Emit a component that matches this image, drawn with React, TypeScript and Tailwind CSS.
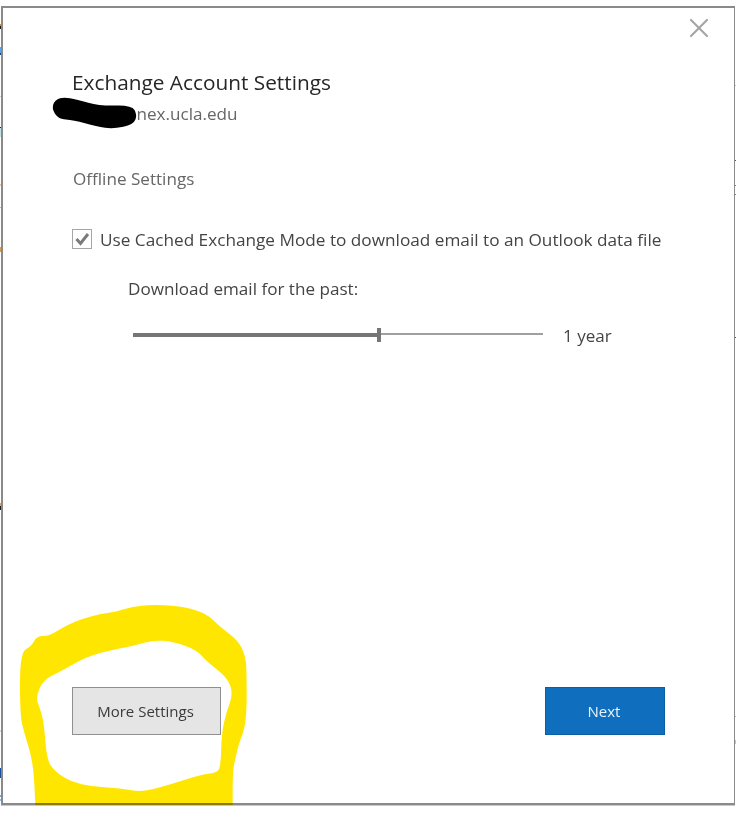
import React from "react";
import { X } from "lucide-react";

const font = { fontFamily: '"Open Sans", "Noto Sans", sans-serif' };

// bits of the windows behind the dialog that peek out at the screen edge
const leftMarks = [
  { top: 24, height: 2, color: "#d98a2b" },
  { top: 26, height: 3, color: "#1a1a1a" },
  { top: 47, height: 6, color: "#5aa3e8" },
  { top: 53, height: 2, color: "#1d3f73" },
  { top: 96, height: 1, color: "#cfcfcf" },
  { top: 127, height: 1, color: "#222222" },
  { top: 128, height: 9, color: "#bfe3e6" },
  { top: 184, height: 2, color: "#f0c890" },
  { top: 207, height: 1, color: "#bdbdbd" },
  { top: 247, height: 5, color: "#e09a45" },
  { top: 503, height: 3, color: "#e8a060" },
  { top: 506, height: 4, color: "#222222" },
  { top: 730, height: 2, color: "#cfe0d8" },
  { top: 768, height: 10, color: "#1a4f9c" },
  { top: 795, height: 2, color: "#7aa7d8" },
  { top: 799, height: 2, color: "#9ab8d8" },
];

const rightMarks = [
  { top: 85, height: 1, color: "#c4c4c4" },
  { top: 160, height: 1, color: "#555555" },
  { top: 185, height: 1, color: "#b5752d" },
  { top: 194, height: 1, color: "#b5752d" },
  { top: 337, height: 1, color: "#555555" },
  { top: 716, height: 1, color: "#bdbdbd" },
  { top: 740, height: 4, color: "#c4c8a8" },
];

// the last points run past the crop so the marker stays cut off flat at the dialog edge
const yellowOuter = [[60,188],[95,168],[110,138],[148,138],[200,105],[250,85],[300,72],[345,66],[415,45],[520,45],[590,60],[630,80],[660,110],[715,152],[735,195],[740,235],[740,400],[715,465],[708,500],[698,540],[698,660],[698,760],[110,760],[105,610],[98,510],[70,420],[60,370]];
const yellowInner = [[130,270],[180,245],[260,200],[340,178],[400,168],[460,150],[520,155],[590,180],[620,215],[680,260],[700,310],[678,370],[665,430],[662,530],[650,548],[600,555],[520,580],[430,607],[360,595],[280,590],[210,575],[160,540],[140,505],[132,400],[120,355],[107,322]];
const blackBlob = [[155,325],[165,300],[190,291],[230,298],[300,318],[395,315],[412,345],[400,374],[340,387],[290,380],[220,360],[175,357]];

// closed curve through the midpoints, keeps the marker strokes from looking faceted
function smooth(pts: number[][]) {
  const mid = (a: number[], b: number[]) => `${(a[0] + b[0]) / 2} ${(a[1] + b[1]) / 2}`;
  let d = `M${mid(pts[pts.length - 1], pts[0])}`;
  pts.forEach((p, i) => {
    d += ` Q${p[0]} ${p[1]} ${mid(p, pts[(i + 1) % pts.length])}`;
  });
  return d + " Z";
}

function CloseButton() {
  return (
    <div className="flex justify-end pr-[19px] pt-[4px]">
      <X className="h-[32px] w-[32px] text-[#a6a6a6]" strokeWidth={1.6} absoluteStrokeWidth />
    </div>
  );
}

function CheckBox() {
  return (
    <div className="mb-[2px] h-[20px] w-[20px] border border-[#a6a6a6]">
      <svg width="18" height="18" viewBox="0 0 18 18">
        <path d="M3.5 9 L7.5 13.5 L15 4" fill="none" stroke="#7a7a7a" strokeWidth="3" />
      </svg>
    </div>
  );
}

function RetentionSlider() {
  return (
    <div className="ml-[61px] mt-[22px] flex items-center">
      <div className="relative flex h-[14px] w-[410px] items-center">
        <div className="h-[4px] w-[246px] bg-[#767676]" />
        <div className="mb-[2px] h-[2px] flex-1 bg-[#a0a0a0]" />
        <div className="absolute left-[244px] top-0 h-[14px] w-[4px] bg-[#767676]" />
      </div>
      <span className="ml-[20px] mt-[2px] text-[17px] leading-[22px] text-[#444444]">1 year</span>
    </div>
  );
}

export default function App() {
  return (
    <div className="relative h-[829px] w-[736px] overflow-hidden bg-white" style={font}>
      {leftMarks.map((m) => (
        <div key={m.top} className="absolute left-0 w-[1px]" style={{ top: m.top, height: m.height, background: m.color }} />
      ))}
      {rightMarks.map((m) => (
        <div key={m.top} className="absolute right-0 w-[1px]" style={{ top: m.top, height: m.height, background: m.color }} />
      ))}

      <div className="ml-[1px] mt-[6px] flex h-[799px] w-[734px] flex-col border-2 border-r border-[#8a8a8a] bg-white shadow-[0_1px_0_#c8c8c8]">
        <CloseButton />
        <div className="flex flex-1 flex-col pl-[69px] pt-[24px]">
          <h1 className="text-[20.8px] leading-[28px] text-[#262626]">Exchange Account Settings</h1>
          <p className="mt-[7px] pl-[54px] text-[17.1px] leading-[22px] text-[#666666]">unex.ucla.edu</p>
          <h2 className="mt-[42px] pl-[1px] text-[17.1px] leading-[24px] text-[#666666]">Offline Settings</h2>
          <div className="mt-[37px] flex items-center">
            <CheckBox />
            <span className="ml-[8px] text-[17.2px] leading-[24px] text-[#444444]">
              Use Cached Exchange Mode to download email to an Outlook data file
            </span>
          </div>
          <p className="ml-[56px] mt-[25px] text-[17.1px] leading-[24px] text-[#444444]">
            Download email for the past:
          </p>
          <RetentionSlider />
          <div className="mt-auto flex justify-between pb-[68px] pr-[69px]">
            <button className="h-[48px] w-[149px] border border-[#8f8f8f] bg-[#e5e5e5] pr-[2px] text-[15px] text-[#3b3b3b]">
              More Settings
            </button>
            <button className="h-[48px] w-[120px] border border-[#0a5ea6] bg-[#106ebe] pr-[2px] text-[15px] text-[#e8f2fb]">
              Next
            </button>
          </div>
        </div>
      </div>

      {/* Hand-drawn markup over the screenshot */}
      <svg className="pointer-events-none absolute left-0 top-0" width="270" height="260" viewBox="0 0 810 780">
        <path d={smooth(blackBlob)} fill="#000" />
      </svg>
      <svg
        className="pointer-events-none absolute left-0 top-[590px] mix-blend-multiply"
        width="270"
        height="215"
        viewBox="0 0 810 645"
      >
        <path fillRule="evenodd" fill="#ffe600" d={`${smooth(yellowOuter)} ${smooth(yellowInner)}`} />
      </svg>
    </div>
  );
}
